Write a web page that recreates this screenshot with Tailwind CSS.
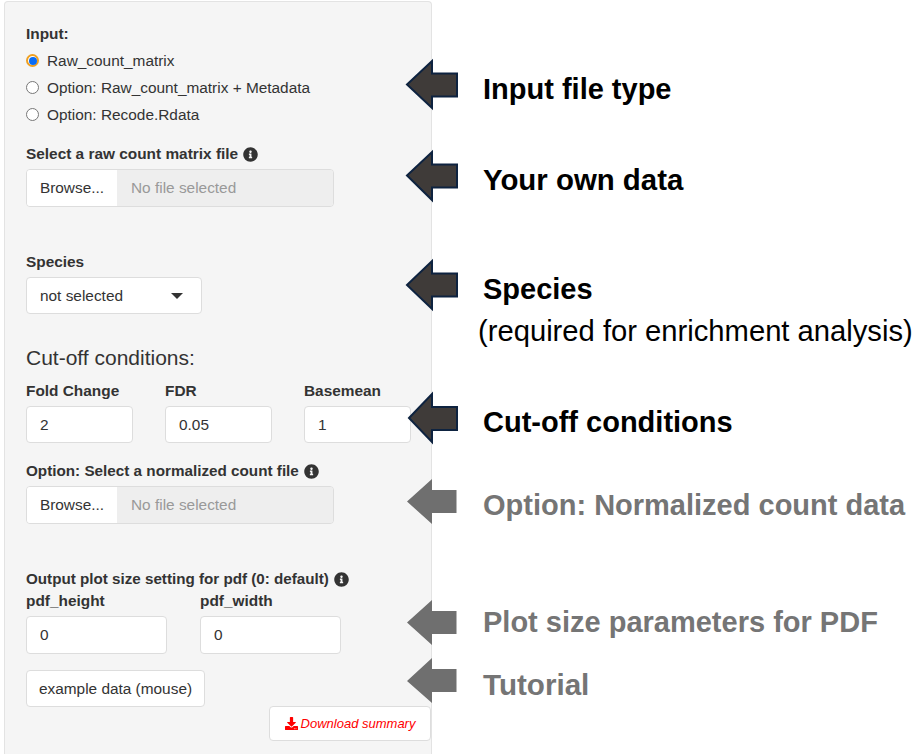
<!DOCTYPE html>
<html lang="en">
<head>
    <meta charset="UTF-8">
    <title>Input settings</title>
    <script src="https://cdn.jsdelivr.net/npm/@tailwindcss/browser@4"></script>
</head>
<body class="relative h-[754px] w-[913px] overflow-hidden bg-white font-['Liberation_Sans',Arial,sans-serif] text-[#333]">

    <div class="flex">
        <!-- Sidebar panel -->
        <div class="ml-1 mt-px h-[753px] w-[428px] shrink-0 rounded-t border border-b-0 border-[#e3e3e3] bg-[#f5f5f5] pl-[21px] pt-[23px] text-[15.4px]">
            <div class="h-[18px] font-bold leading-[18px]">Input:</div>
            <div class="mt-[4px] flex h-[27px] items-center gap-[8px]">
                <span class="flex size-[13px] items-center justify-center rounded-full border-2 border-[#f0a020] bg-white"><span class="size-[8px] rounded-full bg-[#0a6cf5]"></span></span>
                <span>Raw_count_matrix</span>
            </div>
            <div class="flex h-[27px] items-center gap-[8px]">
                <span class="size-[13px] rounded-full border border-[#777] bg-white"></span>
                <span>Option: Raw_count_matrix + Metadata</span>
            </div>
            <div class="flex h-[27px] items-center gap-[8px]">
                <span class="size-[13px] rounded-full border border-[#777] bg-white"></span>
                <span>Option: Recode.Rdata</span>
            </div>

            <div class="mt-[16px] flex h-[20px] items-center gap-[5px] font-bold">
                Select a raw count matrix file
                <svg class="size-[15px] fill-[#333]" viewBox="0 0 512 512"><path d="M256 8C119.043 8 8 119.083 8 256c0 136.997 111.043 248 248 248s248-111.003 248-248C504 119.083 392.957 8 256 8zm0 110c23.196 0 42 18.804 42 42s-18.804 42-42 42-42-18.804-42-42 18.804-42 42-42zm56 254c0 6.627-5.373 12-12 12h-88c-6.627 0-12-5.373-12-12v-24c0-6.627 5.373-12 12-12h12v-64h-12c-6.627 0-12-5.373-12-12v-24c0-6.627 5.373-12 12-12h64c6.627 0 12 5.373 12 12v100h12c6.627 0 12 5.373 12 12v24z"/></svg>
            </div>
            <div class="mt-[5px] flex h-[38px] w-[308px] overflow-hidden rounded border border-[#ddd]">
                <div class="flex w-[90px] items-center justify-center bg-white">Browse...</div>
                <div class="flex flex-1 items-center bg-[#eee] pl-[14px] text-[#999]">No file selected</div>
            </div>

            <div class="mt-[45px] h-[20px] font-bold leading-[20px]">Species</div>
            <div class="mt-[5px] flex h-[37px] w-[176px] items-center justify-between rounded border border-[#ddd] bg-white pl-[13px] pr-[18px]">
                <span>not selected</span>
                <span class="h-0 w-0 border-x-[6px] border-t-[6px] border-x-transparent border-t-[#333]"></span>
            </div>

            <div class="mt-[32px] h-[24px] text-[21px] leading-[24px]">Cut-off conditions:</div>

            <div class="mt-[11px] flex gap-[32px]">
                <div class="w-[107px]">
                    <div class="h-[20px] font-bold leading-[20px]">Fold Change</div>
                    <input type="text" value="2" class="mt-[5px] h-[37px] w-full rounded border border-[#ddd] bg-white pl-[13px]">
                </div>
                <div class="w-[107px]">
                    <div class="h-[20px] font-bold leading-[20px]">FDR</div>
                    <input type="text" value="0.05" class="mt-[5px] h-[37px] w-full rounded border border-[#ddd] bg-white pl-[13px]">
                </div>
                <div class="w-[107px]">
                    <div class="h-[20px] font-bold leading-[20px]">Basemean</div>
                    <input type="text" value="1" class="mt-[5px] h-[37px] w-full rounded border border-[#ddd] bg-white pl-[13px]">
                </div>
            </div>

            <div class="mt-[18px] flex h-[20px] items-center gap-[5px] text-[15.25px] font-bold">
                Option: Select a normalized count file
                <svg class="size-[15px] fill-[#333]" viewBox="0 0 512 512"><path d="M256 8C119.043 8 8 119.083 8 256c0 136.997 111.043 248 248 248s248-111.003 248-248C504 119.083 392.957 8 256 8zm0 110c23.196 0 42 18.804 42 42s-18.804 42-42 42-42-18.804-42-42 18.804-42 42-42zm56 254c0 6.627-5.373 12-12 12h-88c-6.627 0-12-5.373-12-12v-24c0-6.627 5.373-12 12-12h12v-64h-12c-6.627 0-12-5.373-12-12v-24c0-6.627 5.373-12 12-12h64c6.627 0 12 5.373 12 12v100h12c6.627 0 12 5.373 12 12v24z"/></svg>
            </div>
            <div class="mt-[5px] flex h-[38px] w-[308px] overflow-hidden rounded border border-[#ddd]">
                <div class="flex w-[90px] items-center justify-center bg-white">Browse...</div>
                <div class="flex flex-1 items-center bg-[#eee] pl-[14px] text-[#999]">No file selected</div>
            </div>

            <div class="mt-[45px] flex h-[20px] items-center gap-[5px] text-[15.2px] font-bold">
                Output plot size setting for pdf (0: default)
                <svg class="size-[15px] fill-[#333]" viewBox="0 0 512 512"><path d="M256 8C119.043 8 8 119.083 8 256c0 136.997 111.043 248 248 248s248-111.003 248-248C504 119.083 392.957 8 256 8zm0 110c23.196 0 42 18.804 42 42s-18.804 42-42 42-42-18.804-42-42 18.804-42 42-42zm56 254c0 6.627-5.373 12-12 12h-88c-6.627 0-12-5.373-12-12v-24c0-6.627 5.373-12 12-12h12v-64h-12c-6.627 0-12-5.373-12-12v-24c0-6.627 5.373-12 12-12h64c6.627 0 12 5.373 12 12v100h12c6.627 0 12 5.373 12 12v24z"/></svg>
            </div>
            <div class="mt-[2px] flex gap-[33px]">
                <div class="w-[141px]">
                    <div class="h-[20px] font-bold leading-[20px]">pdf_height</div>
                    <input type="text" value="0" class="mt-[5px] h-[38px] w-full rounded border border-[#ddd] bg-white pl-[13px]">
                </div>
                <div class="w-[141px]">
                    <div class="h-[20px] font-bold leading-[20px]">pdf_width</div>
                    <input type="text" value="0" class="mt-[5px] h-[38px] w-full rounded border border-[#ddd] bg-white pl-[13px]">
                </div>
            </div>

            <div class="mt-[16px] flex h-[37px] w-[179px] items-center justify-center rounded border border-[#ddd] bg-white">example data (mouse)</div>
            <div class="-mt-px flex justify-end">
                <div class="flex h-[35px] w-[162px] items-center justify-center gap-[3px] rounded border border-[#ddd] bg-white text-[13px] italic text-[#f00]">
                    <svg class="size-[13px] fill-[#f00]" viewBox="0 0 512 512"><path d="M216 0h80c13.3 0 24 10.7 24 24v168h87.7c17.8 0 26.7 21.5 14.1 34.1L269.7 378.3c-7.5 7.5-19.8 7.5-27.3 0L90.1 226.1c-12.6-12.6-3.7-34.1 14.1-34.1H192V24c0-13.3 10.7-24 24-24zm296 376v112c0 13.3-10.7 24-24 24H24c-13.3 0-24-10.7-24-24V376c0-13.3 10.7-24 24-24h146.7l49 49c20.1 20.1 52.5 20.1 72.6 0l49-49H488c13.3 0 24 10.7 24 24zm-124 88c0-11-9-20-20-20s-20 9-20 20 9 20 20 20 20-9 20-20zm64 0c0-11-9-20-20-20s-20 9-20 20 9 20 20 20 20-9 20-20z"/></svg>
                    Download summary
                </div>
            </div>
        </div>

        <!-- Annotation labels -->
        <div class="ml-[51px] flex w-[430px] shrink-0 flex-col text-[29px] font-bold leading-[34px] text-black">
            <div class="mt-[72px]">Input file type</div>
            <div class="mt-[57px] text-[29.4px]">Your own data</div>
            <div class="mt-[75px]">Species</div>
            <div class="-ml-[5px] mt-[8px] whitespace-nowrap text-[29.2px] font-normal">(required for enrichment analysis)</div>
            <div class="mt-[57px]">Cut-off conditions</div>
            <div class="mt-[49px] whitespace-nowrap text-[#757575]">Option: Normalized count data</div>
            <div class="mt-[83px] whitespace-nowrap text-[#757575]">Plot size parameters for PDF</div>
            <div class="mt-[29px] text-[29.6px] text-[#757575]">Tutorial</div>
        </div>
    </div>

    <!-- Arrows over the panel edge -->
    <svg class="absolute left-0 top-0" width="913" height="754">
        <g fill="#3f3b39" stroke="#0e2340" stroke-width="2">
            <path d="M407 84.5 L432 61 V73.5 H457 V96.5 H432 V108 Z"/>
            <path d="M407 175.5 L432 152 V164.5 H457 V187.5 H432 V200 Z"/>
            <path d="M407 285 L432 261 V273.5 H457 V296.5 H432 V309 Z"/>
            <path d="M409 418 L432 394 V407 H457 V430 H432 V442 Z"/>
        </g>
        <g fill="#6f6f6f">
            <path d="M407 501.5 L432 479 V490 H456.500 V513 H432 V524 Z"/>
            <path d="M407 622.500 L432 600 V611 H456.500 V634 H432 V645 Z"/>
            <path d="M407 681 L432 658 V669 H456.500 V692 H432 V703 Z"/>
        </g>
    </svg>

</body>
</html>
